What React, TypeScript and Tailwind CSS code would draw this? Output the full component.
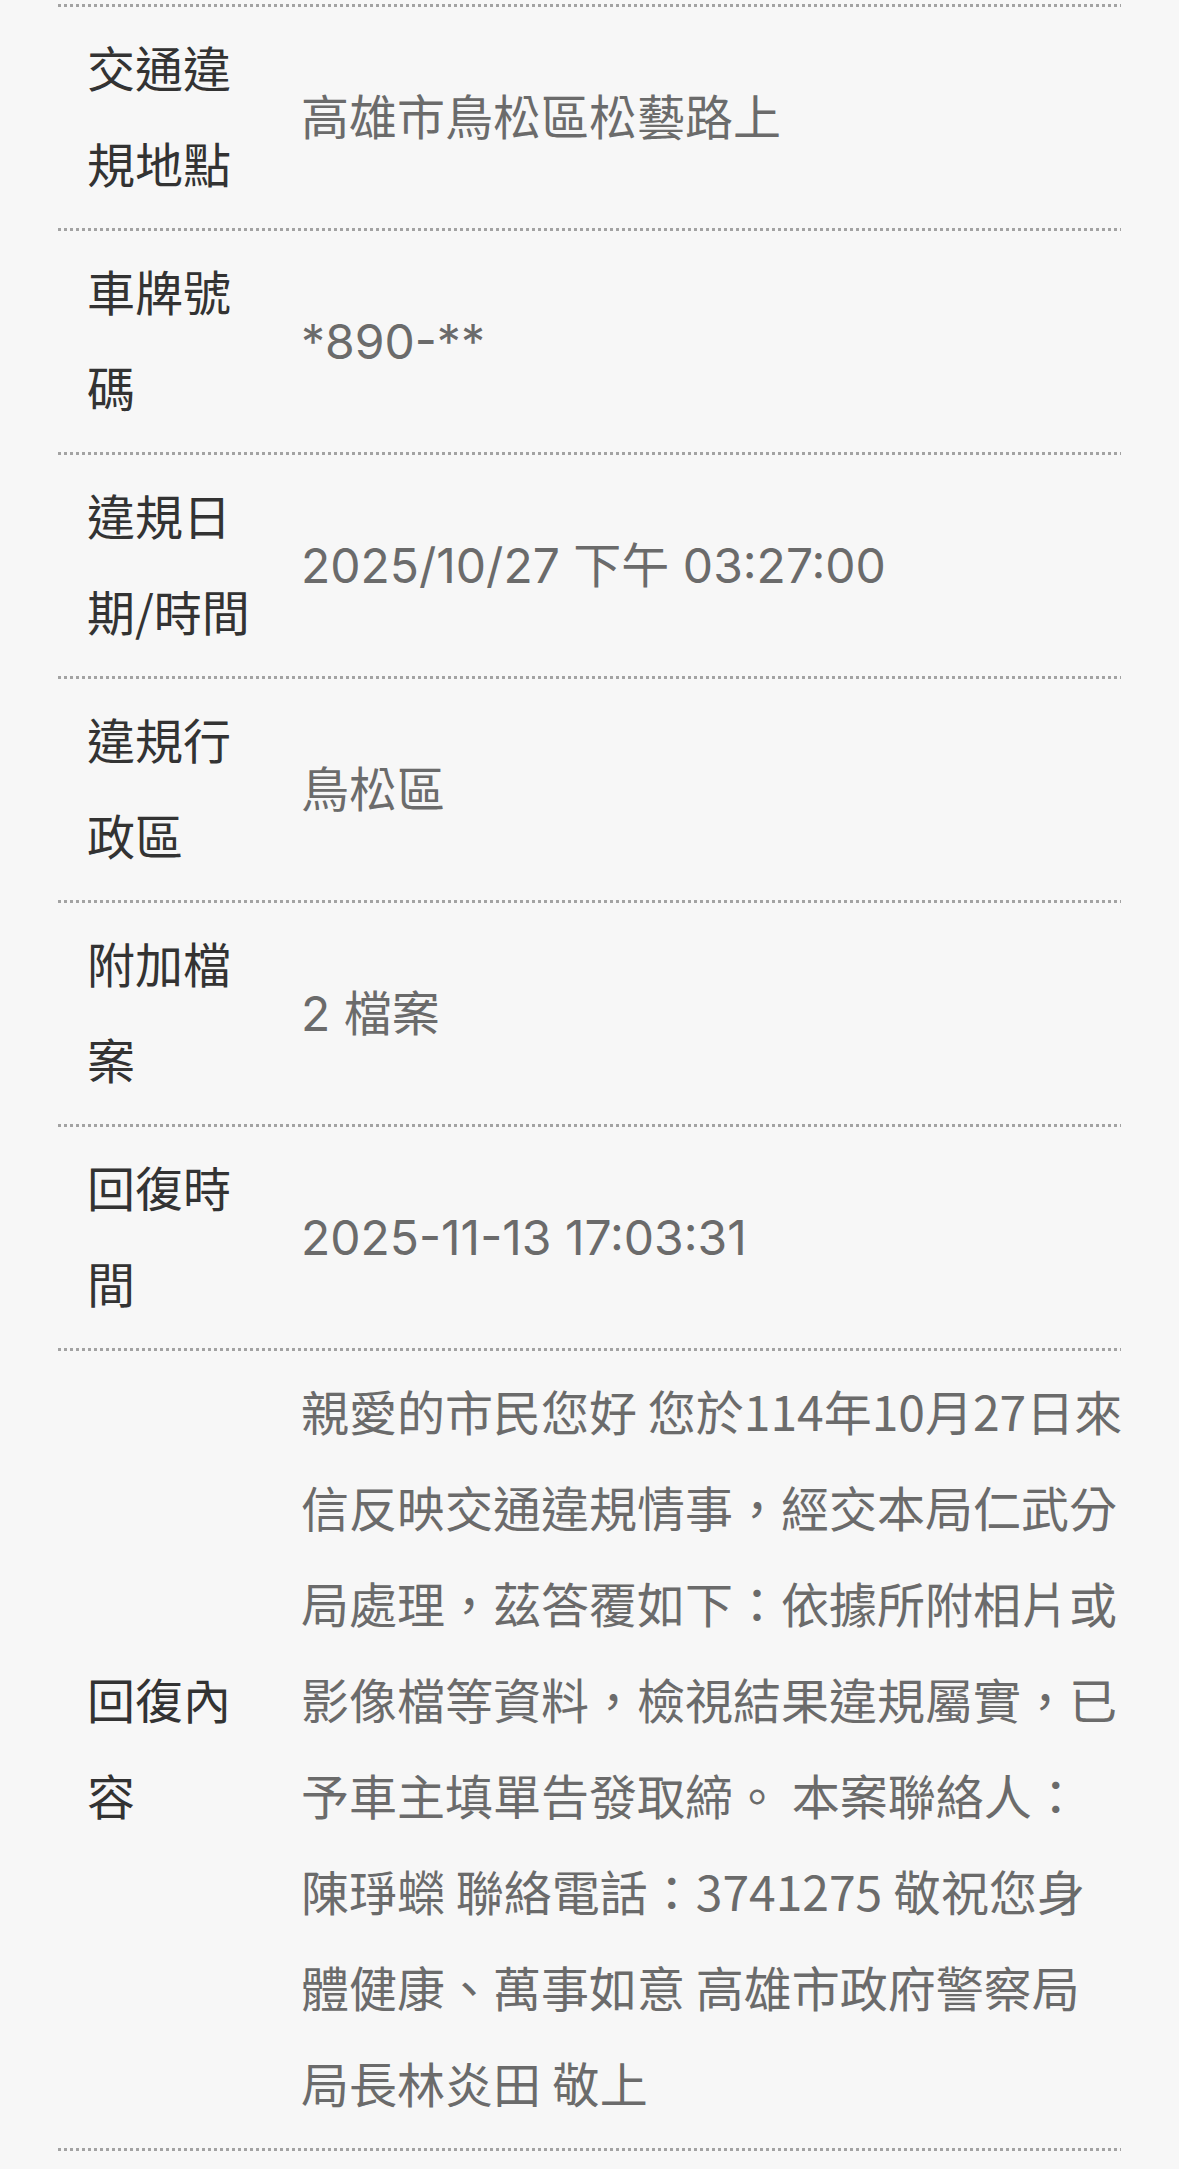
import React from "react";

type Row = { label: string[]; value: React.ReactNode; cjk?: boolean };

const contentLines = [
  "親愛的市民您好 您於114年10月27日來",
  "信反映交通違規情事，經交本局仁武分",
  "局處理，茲答覆如下：依據所附相片或",
  "影像檔等資料，檢視結果違規屬實，已",
  "予車主填單告發取締。 本案聯絡人：",
  "陳琤蠑 聯絡電話：3741275 敬祝您身",
  "體健康、萬事如意 高雄市政府警察局",
  "局長林炎田 敬上",
];

const rows: Row[] = [
  { label: ["交通違", "規地點"], value: "高雄市鳥松區松藝路上" },
  { label: ["車牌號", "碼"], value: "*890-**" },
  { label: ["違規日", "期/時間"], value: "2025/10/27 下午 03:27:00" },
  { label: ["違規行", "政區"], value: "鳥松區" },
  { label: ["附加檔", "案"], value: "2 檔案" },
  { label: ["回復時", "間"], value: "2025-11-13 17:03:31" },
  {
    label: ["回復內", "容"],
    cjk: true,
    value: (
      <div style={{ fontFamily: '"Noto Sans CJK TC", "Noto Sans", sans-serif' }}>
        {contentLines.map((l, i) => (
          <div key={i} className="whitespace-nowrap">
            {l}
          </div>
        ))}
      </div>
    ),
  },
];

function Divider() {
  return (
    <div className="h-[3px] w-full bg-[repeating-linear-gradient(90deg,#a3a3a3_0px,#a3a3a3_3px,transparent_3px,transparent_6px)]" />
  );
}

export default function App() {
  return (
    <div
      className="min-h-screen bg-[#f7f7f7] pt-[4px] px-[58px] text-[48px] leading-[96px]"
      style={{ fontFamily: 'Inter, "Noto Sans CJK TC", "Noto Sans", sans-serif' }}
    >
      <Divider />
      {rows.map((r, i) => (
        <React.Fragment key={i}>
          <div className="flex items-center">
            <div
              className="w-[211px] shrink-0 pl-[29px] pr-[10px] pt-[11px] pb-[18px] text-[#333333]"
              style={{ fontFamily: '"Noto Sans CJK TC", "Noto Sans", sans-serif' }}
            >
              {r.label.map((t, j) => (
                <div key={j} className="whitespace-nowrap">
                  {t}
                </div>
              ))}
            </div>
            <div
              className={
                r.cjk
                  ? "flex-1 pl-[32px] pt-[11px] pb-[18px] text-[#6b6b6b]"
                  : "flex-1 pl-[32px] pt-[15px] pb-[14px] text-[#6b6b6b]"
              }
            >
              {r.value}
            </div>
          </div>
          <Divider />
        </React.Fragment>
      ))}
    </div>
  );
}
